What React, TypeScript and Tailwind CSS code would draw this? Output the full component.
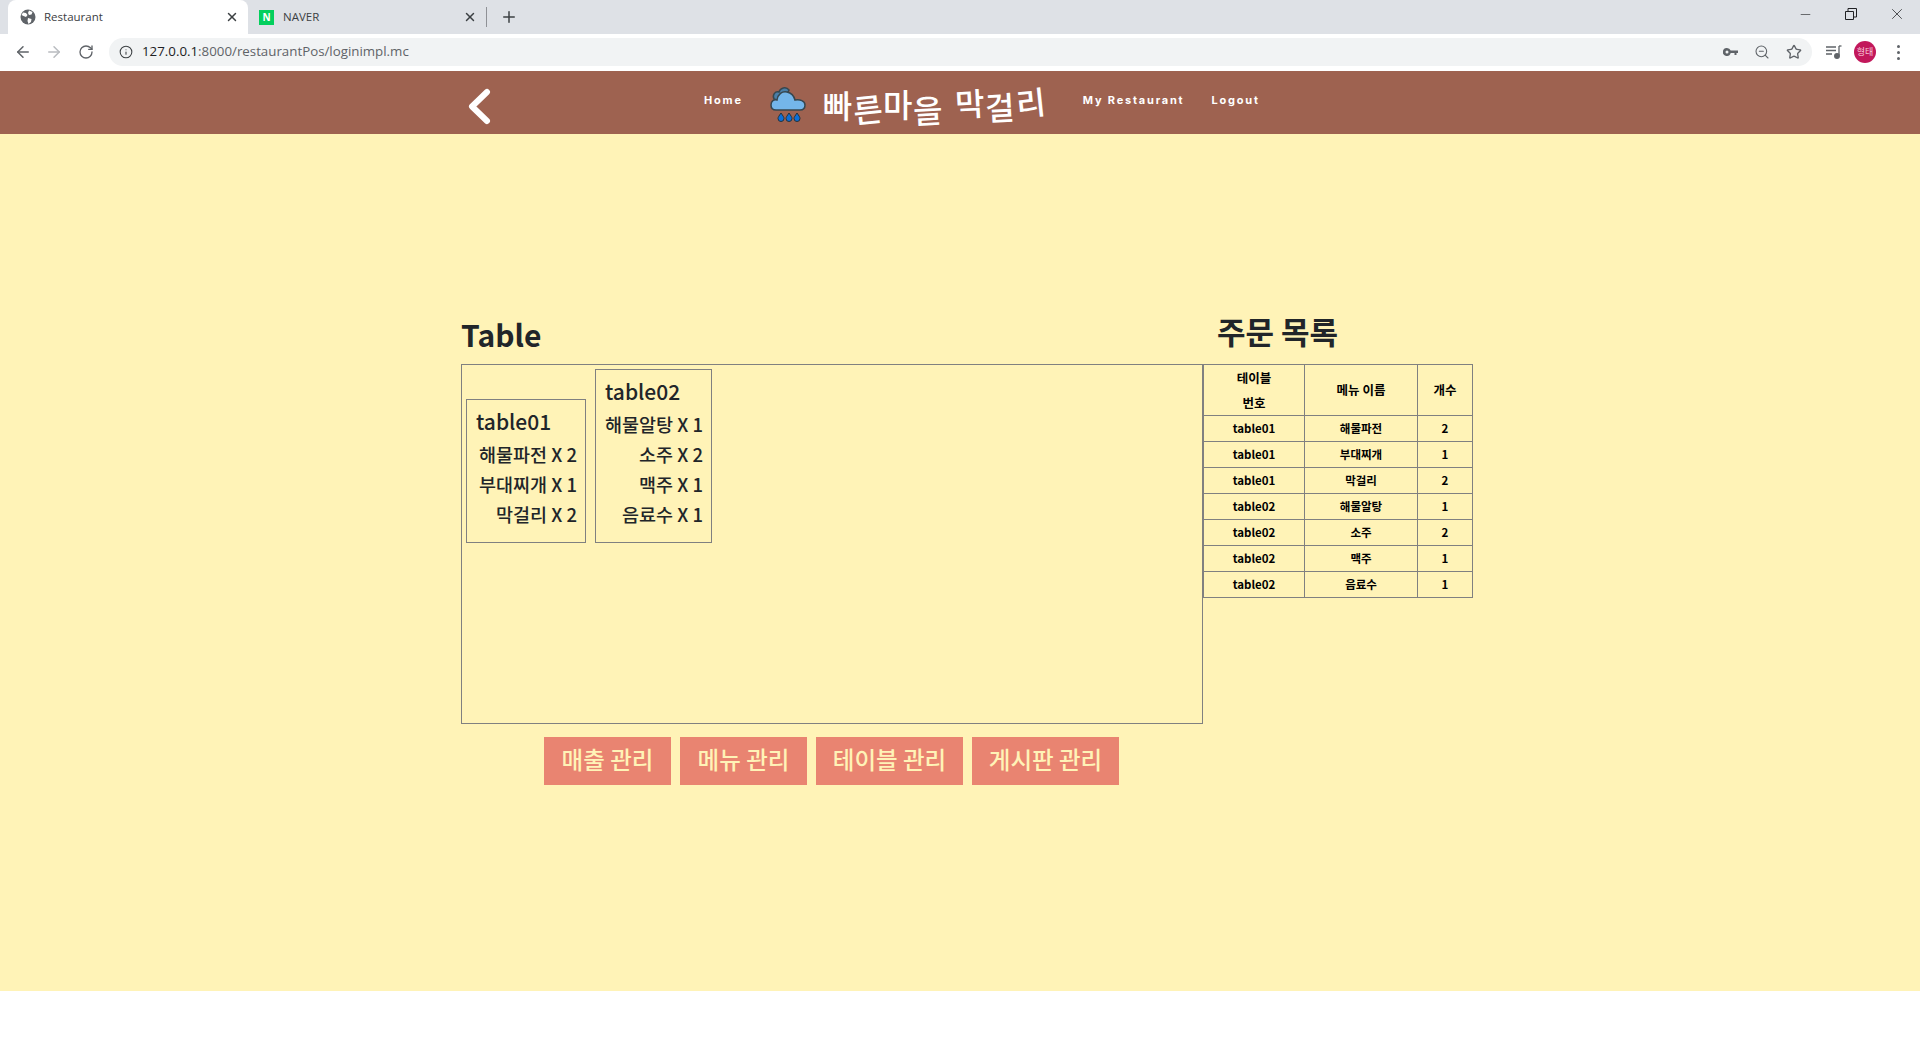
import { ArrowLeft, ArrowRight, Minus, Plus, RotateCw, Star, X, ZoomOut, Info } from "lucide-react";

const FONT_KR = "font-['Noto_Sans_CJK_KR','Noto_Sans',sans-serif]";
const FONT_UI = "font-['Open_Sans','Liberation_Sans',sans-serif]";

const orders = [
  ["table01", "해물파전", "2"],
  ["table01", "부대찌개", "1"],
  ["table01", "막걸리", "2"],
  ["table02", "해물알탕", "1"],
  ["table02", "소주", "2"],
  ["table02", "맥주", "1"],
  ["table02", "음료수", "1"],
];

const tables = [
  { name: "table01", width: "w-[120px]", items: ["해물파전 X 2", "부대찌개 X 1", "막걸리 X 2"] },
  { name: "table02", width: "w-[117px]", items: ["해물알탕 X 1", "소주 X 2", "맥주 X 1", "음료수 X 1"] },
];

const logoChars = [
  { c: "빠", cls: "translate-y-[1px]" },
  { c: "른", cls: "translate-y-[5px] -rotate-6" },
  { c: "마", cls: "translate-y-[0px]" },
  { c: "을", cls: "translate-y-[6px] -rotate-3 mr-[12px]" },
  { c: "막", cls: "-translate-y-[1px] -rotate-3" },
  { c: "걸", cls: "translate-y-[3px] -rotate-3" },
  { c: "리", cls: "-translate-y-[2px] -rotate-6" },
];

const buttons = [
  { label: "매출 관리", width: "w-[127px]" },
  { label: "메뉴 관리", width: "w-[127px]" },
  { label: "테이블 관리", width: "w-[147px]" },
  { label: "게시판 관리", width: "w-[147px]" },
];

function Globe() {
  return (
    <svg width="16" height="16" viewBox="0 0 16 16" className="shrink-0">
      <circle cx="8" cy="8" r="7.5" fill="#5f6368" />
      <path d="M3 3.5l3 .5 1.5 2L6 8 3.5 7 1.5 6zM9 1.5l3.5 1.5-1 2.5-2.5.5L8 4zM8 9l3.5 1-.5 3-2.5 2L7.500 12z" fill="#fff" />
    </svg>
  );
}

function Cloud() {
  return (
    <svg width="38" height="38" viewBox="0 0 38 38" className="shrink-0">
      <path d="M4 15c-2-4 1-8 5-7 1-4 7-6 10-2l-6 12z" fill="#4a7fa8" stroke="#37474f" strokeWidth="1.500" />
      <path d="M6 26c-4 0-5-2-5-5 0-4 3-6 6-5 1-6 5-9 10-8 5 1 7 4 8 8 5-1 10 1 10 5 0 3-2 5-5 5z" fill="#74b6ea" stroke="#37474f" strokeWidth="1.500" />
      <path d="M11 29c-2 3-3 4-3 5.500a3 3 0 0 0 6 0c0-1.500-1-2.500-3-5.500zM19 29c-2 3-3 4-3 5.500a3 3 0 0 0 6 0c0-1.500-1-2.500-3-5.500zM27 29c-2 3-3 4-3 5.500a3 3 0 0 0 6 0c0-1.500-1-2.500-3-5.500z" fill="#0d6fd8" stroke="#263238" strokeWidth="1" />
    </svg>
  );
}

function Browser() {
  return (
    <div className={`shrink-0 ${FONT_UI}`}>
      <div className="flex h-[34px] items-end bg-[#dee1e6] pl-2">
        <div className="flex h-[34px] w-[240px] items-center rounded-t-lg bg-white pl-[12px] pr-[9px] text-[11.5px] text-[#3c4043]">
          <Globe />
          <span className="ml-2 flex-1">Restaurant</span>
          <X size={14} strokeWidth={2.5} className="text-[#3c4043]" />
        </div>
        <div className="flex h-[34px] w-[238px] items-center pl-[11px] pr-[9px] text-[11.5px] text-[#3c4043]">
          <span className="flex h-[15px] w-[15px] items-center justify-center bg-[#03cf5d] text-[10px] font-bold text-white">N</span>
          <span className="ml-[9px] flex-1">NAVER</span>
          <X size={14} strokeWidth={2.5} className="text-[#3c4043]" />
        </div>
        <div className="mb-[7px] h-[20px] w-px bg-[#8f9196]" />
        <Plus size={18} strokeWidth={2} className="mb-[8px] ml-[13px] text-[#3c4043]" />
        <div className="mb-[11px] ml-auto flex items-center text-[#202124]">
          <Minus size={15} strokeWidth={1} className="mr-[32px]" />
          <svg width="12" height="12" viewBox="0 0 12 12" fill="none" stroke="currentColor" className="mr-[31px]">
            <path d="M.5 3.500h8v8h-8zM3 3.500V.5h8.500V9H8.500" />
          </svg>
          <X size={18} strokeWidth={1} className="mr-[14px]" />
        </div>
      </div>
      <div className="flex h-[36px] items-center bg-white text-[#5f6368]">
        <ArrowLeft size={18} strokeWidth={2} className="ml-[14px]" />
        <ArrowRight size={18} strokeWidth={2} className="ml-[13px] text-[#b9bcc0]" />
        <RotateCw size={16} strokeWidth={2} className="ml-[15px]" />
        <div className="ml-[15px] flex h-[28px] w-[1703px] items-center rounded-full bg-[#f1f3f4]">
          <Info size={14} strokeWidth={1.8} className="ml-[10px] text-[#3c4043]" />
          <span className="ml-[9px] text-[13.3px] text-[#202124]">
            127.0.0.1<span className="text-[#5f6368]">:8000/restaurantPos/loginimpl.mc</span>
          </span>
          <svg width="15" height="9" viewBox="0 0 15 9" fill="#5f6368" className="ml-auto mr-[16px]">
            <path d="M4 0a4 4 0 0 1 3.700 2.500H15v2.600h-1.500v2h-2v-2H7.700A4 4 0 1 1 4 0zm0 2.500a1.500 1.500 0 1 0 0 3 1.500 1.500 0 0 0 0-3z" />
          </svg>
          <ZoomOut size={16} strokeWidth={1.6} className="mr-[16px]" />
          <Star size={16} strokeWidth={2} className="mr-[10px]" />
        </div>
        <svg width="16" height="14" viewBox="0 0 16 14" fill="none" stroke="#5f6368" strokeWidth="1.300" className="ml-[14px]">
          <path d="M0 2h10M0 5.500h10M0 9h6M13 1v9.500" />
          <path d="M13 1h2.500" />
          <circle cx="11" cy="11" r="2.300" fill="#5f6368" />
        </svg>
        <span className={`ml-[12px] flex h-[22px] w-[22px] items-center justify-center rounded-full bg-[#c2185b] text-[9px] text-[#f8c8d8] ${FONT_KR}`}>
          형태
        </span>
        <span className="ml-[21px] flex flex-col gap-[3px]">
          <span className="h-[3px] w-[3px] rounded-full bg-[#5f6368]" />
          <span className="h-[3px] w-[3px] rounded-full bg-[#5f6368]" />
          <span className="h-[3px] w-[3px] rounded-full bg-[#5f6368]" />
        </span>
      </div>
    </div>
  );
}

function Header() {
  const link = "text-[11px] font-bold tracking-[1.8px] text-white font-['Inter',sans-serif]";
  return (
    <header className="mt-px flex h-[63px] shrink-0 items-center bg-[#9e6250] pl-[468px]">
      <svg width="23" height="37" viewBox="0 0 23 37" fill="none" stroke="#fff" strokeWidth="6" strokeLinecap="round" strokeLinejoin="round" className="mt-[7px]">
        <path d="M19 4L4 18.500 19 33" />
      </svg>
      <span className={`ml-[213px] -mt-[4px] ${link}`}>Home</span>
      <div className="ml-[27px]"><Cloud /></div>
      <div className={`ml-[15px] flex text-[32px] font-medium leading-none tracking-[0.7px] text-white ${FONT_KR}`}>
        {logoChars.map((item, i) => (
          <span key={i} className={`inline-block ${item.cls}`}>{item.c}</span>
        ))}
      </div>
      <span className={`ml-[37px] -mt-[4px] ${link}`}>My Restaurant</span>
      <span className={`ml-[27px] -mt-[4px] ${link}`}>Logout</span>
    </header>
  );
}

export default function App() {
  const cell = "border border-[#808080] text-center";
  return (
    <div className={`flex h-screen flex-col overflow-hidden bg-white text-[#212529] ${FONT_KR}`}>
      <Browser />
      <Header />
      <main className="h-[857px] shrink-0 bg-[#fff3b7] pl-[461px] pt-[179px]">
        <div className="flex">
          <div className="w-[742px]">
            <h1 className="h-[51px] text-[30px] font-bold leading-[42px]">Table</h1>
            <div className="flex h-[360px] items-start border border-[#808080] p-1">
              <div className="flex items-end gap-[9px]">
                {tables.map((t) => (
                  <div key={t.name} className={`${t.width} border border-[#808080] pb-[13px] pl-[9px] pr-[8px] pt-[5px]`}>
                    <div className="h-[34px] text-[21px] font-medium leading-[33px]">{t.name}</div>
                    {t.items.map((item) => (
                      <div key={item} className="h-[30px] whitespace-nowrap text-right text-[18.5px] font-medium leading-[30px]">{item}</div>
                    ))}
                  </div>
                ))}
              </div>
            </div>
            <div className="mt-[13px] flex justify-center gap-[9px] pr-[1px]">
              {buttons.map((b) => (
                <button key={b.label} className={`${b.width} h-[48px] bg-[#e98471] pb-[3px] text-[23.5px] font-medium text-[#fff3b7]`}>
                  {b.label}
                </button>
              ))}
            </div>
          </div>
          <div className="w-[270px]">
            <h2 className="h-[51px] pl-[14px] text-[31px] font-bold leading-[36px]">주문 목록</h2>
            <table className="w-[269px] table-fixed border-collapse text-[11.5px] font-semibold text-black">
              <colgroup>
                <col className="w-[101px]" />
                <col className="w-[113px]" />
                <col className="w-[55px]" />
              </colgroup>
              <thead>
                <tr className="h-[51px] text-[12.5px]">
                  <th className={`${cell} font-semibold leading-[25px]`}>테이블<br />번호</th>
                  <th className={`${cell} font-semibold`}>메뉴 이름</th>
                  <th className={`${cell} font-semibold`}>개수</th>
                </tr>
              </thead>
              <tbody>
                {orders.map((o) => (
                  <tr key={o[0] + o[1]} className="h-[26px]">
                    <td className={cell}>{o[0]}</td>
                    <td className={cell}>{o[1]}</td>
                    <td className={cell}>{o[2]}</td>
                  </tr>
                ))}
              </tbody>
            </table>
          </div>
        </div>
      </main>
    </div>
  );
}
